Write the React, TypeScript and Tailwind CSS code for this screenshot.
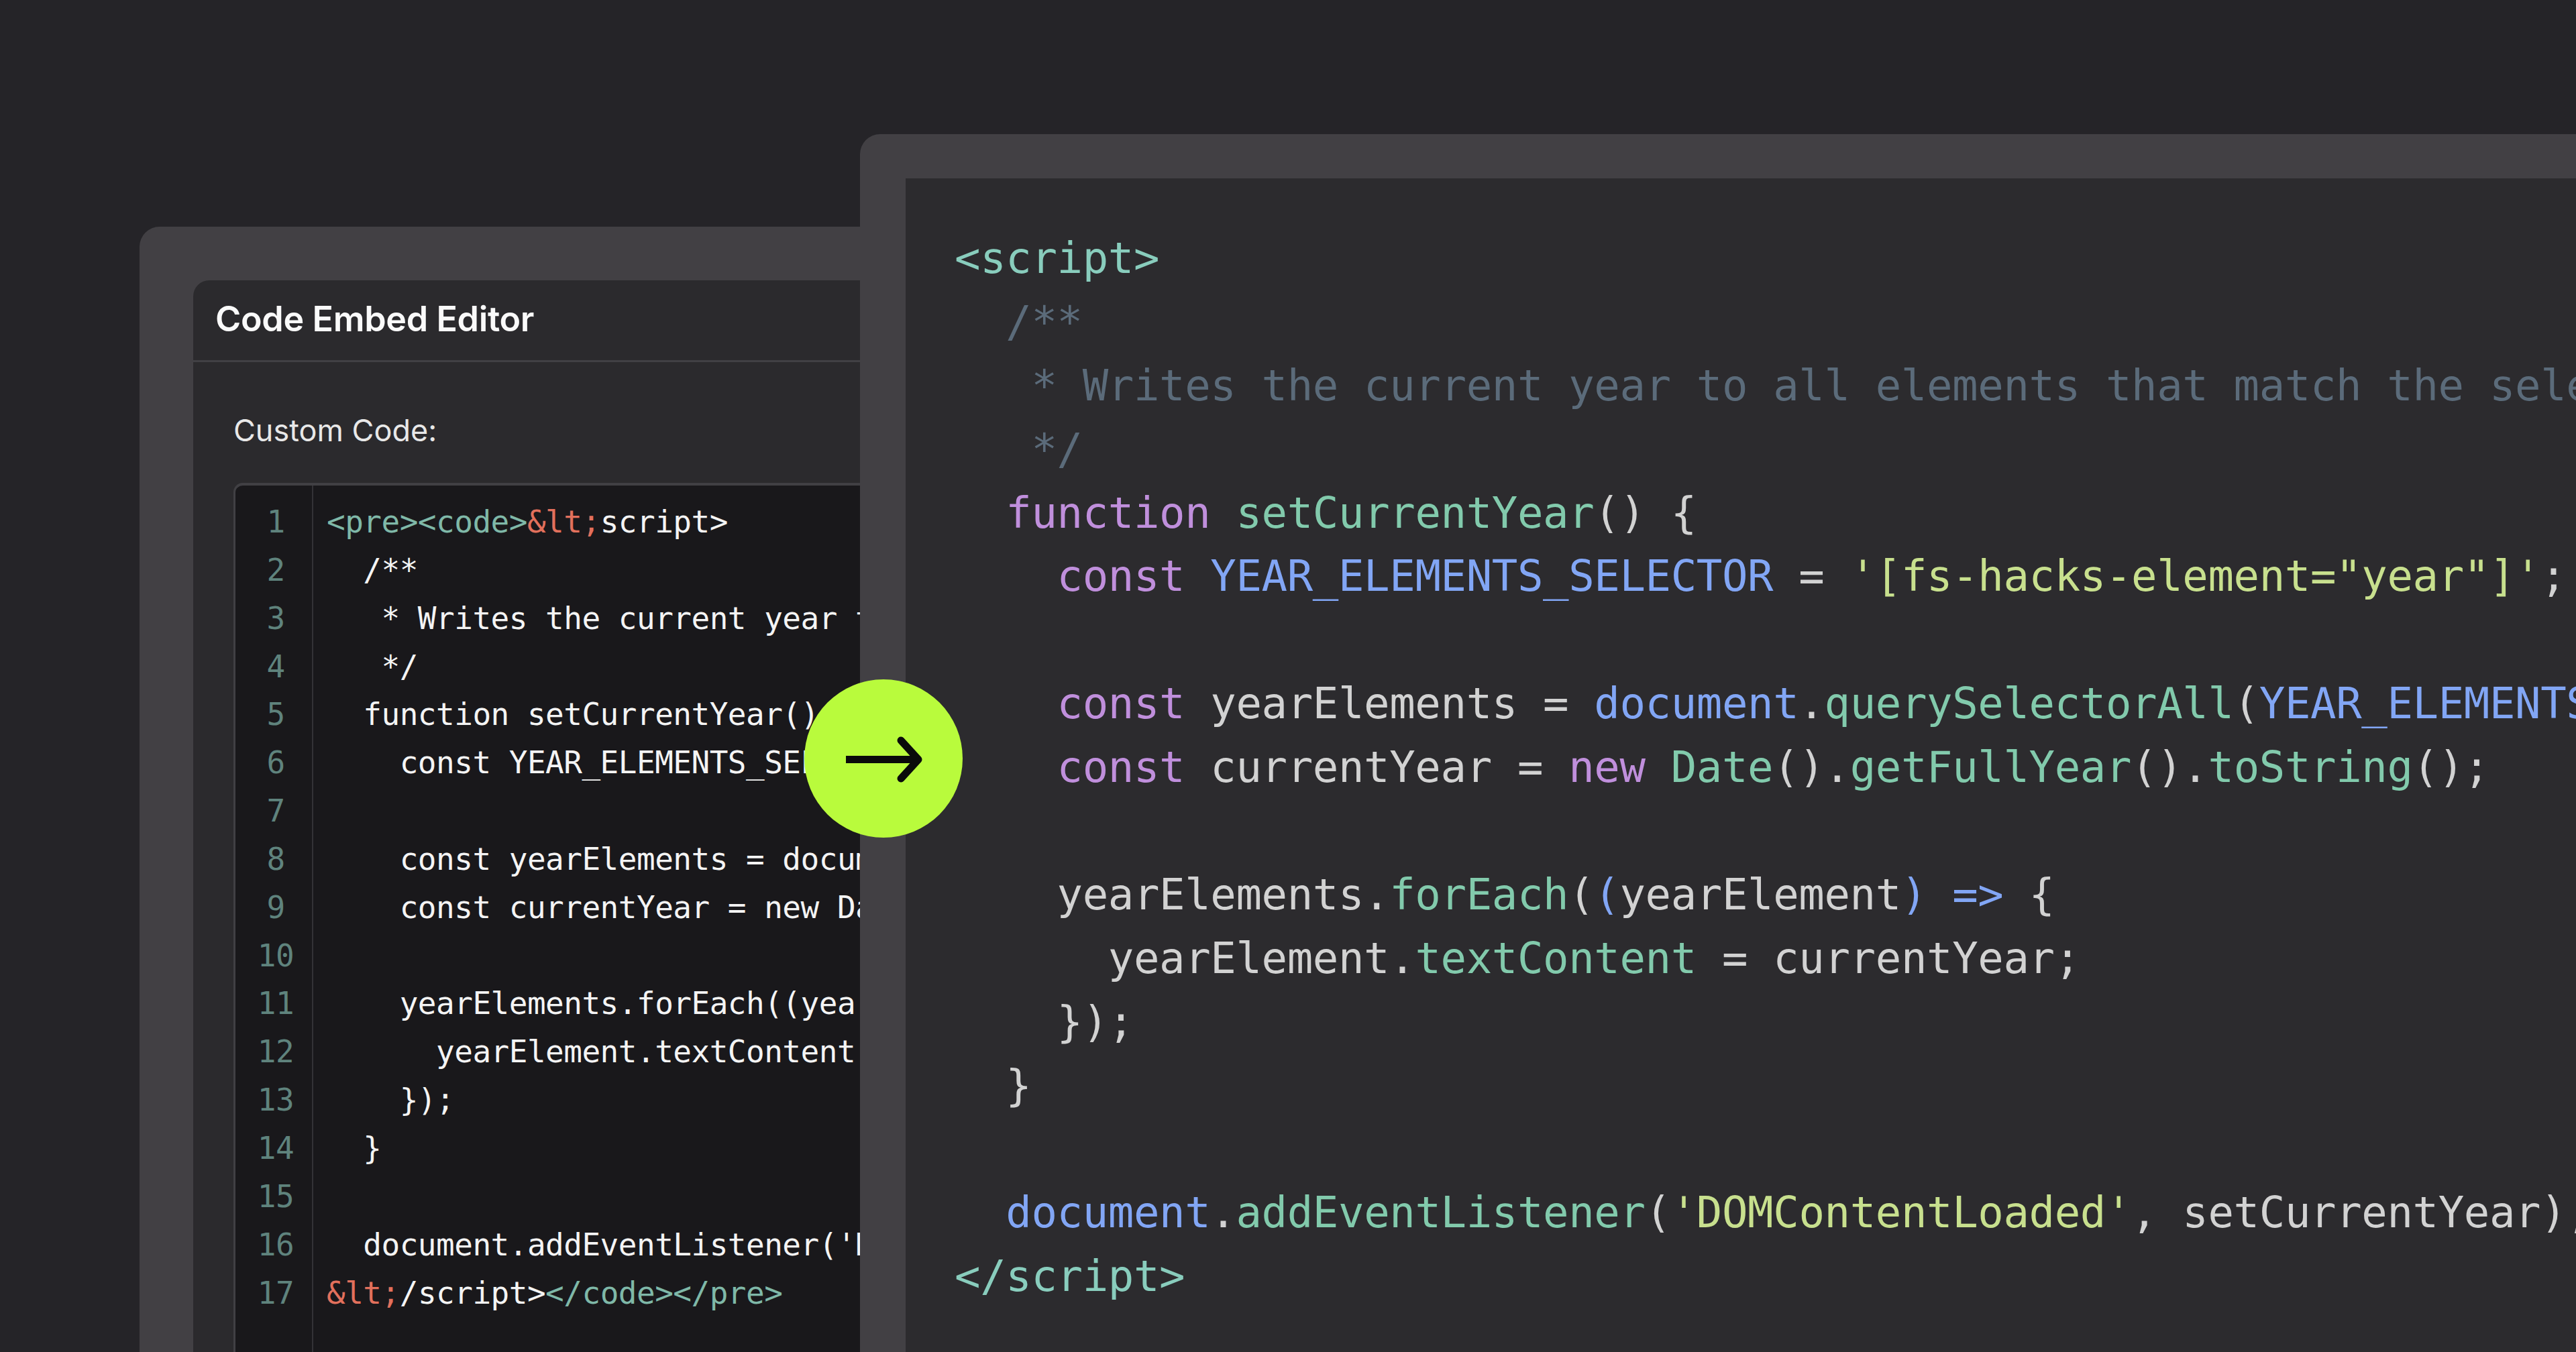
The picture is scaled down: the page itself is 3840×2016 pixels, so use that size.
type Seg = [string, string?];

const mono = "font-['DejaVu_Sans_Mono',monospace] whitespace-pre";

const T = "text-[#89cdbd]";
const C = "text-[#5b6b7a]";
const P = "text-[#c08fdc]";
const G = "text-[#82caac]";
const B = "text-[#82a6f5]";
const S = "text-[#c8e08e]";

const rightLines: Seg[][] = [
  [["<script>", T]],
  [["  /**", C]],
  [["   * Writes the current year to all elements that match the selector.", C]],
  [["   */", C]],
  [["  function", P], [" "], ["setCurrentYear", G], ["() {"]],
  [["    const", P], [" "], ["YEAR_ELEMENTS_SELECTOR", B], [" = "], ["'[fs-hacks-element=\"year\"]'", S], [";"]],
  [],
  [["    const", P], [" yearElements = "], ["document", B], ["."], ["querySelectorAll", G], ["("], ["YEAR_ELEMENTS_SELECTOR", B], [");"]],
  [["    const", P], [" currentYear = "], ["new", P], [" "], ["Date", G], ["()."], ["getFullYear", G], ["()."], ["toString", G], ["();"]],
  [],
  [["    yearElements."], ["forEach", G], ["("], ["(", B], ["yearElement"], [")", B], [" "], ["=>", B], [" {"]],
  [["      yearElement."], ["textContent", G], [" = currentYear;"]],
  [["    });"]],
  [["  }"]],
  [],
  [["  "], ["document", B], ["."], ["addEventListener", G], ["("], ["'DOMContentLoaded'", S], [", setCurrentYear);"]],
  [["</script>", T]],
];

const LT = "text-[#7fb8a8]";
const LO = "text-[#e2705c]";

const leftLines: Seg[][] = [
  [["<pre><code>", LT], ["&lt;", LO], ["script>"]],
  [["  /**"]],
  [["   * Writes the current year to all elements that match the selector."]],
  [["   */"]],
  [["  function setCurrentYear() {"]],
  [["    const YEAR_ELEMENTS_SELECTOR = '[fs-hacks-element=\"year\"]';"]],
  [],
  [["    const yearElements = document.querySelectorAll(YEAR_ELEMENTS_SELECTOR);"]],
  [["    const currentYear = new Date().getFullYear().toString();"]],
  [],
  [["    yearElements.forEach((yearElement) => {"]],
  [["      yearElement.textContent = currentYear;"]],
  [["    });"]],
  [["  }"]],
  [],
  [["  document.addEventListener('DOMContentLoaded', setCurrentYear);"]],
  [["&lt;", LO], ["/script>"], ["</code></pre>", LT]],
];

function Code({ lines, rowClass }: { lines: Seg[][]; rowClass: string }) {
  return (
    <div className="flex flex-col">
      {lines.map((line, i) => (
        <div key={i} className={rowClass}>
          {line.map(([text, color], j) => (
            <span key={j} className={color}>
              {text}
            </span>
          ))}
        </div>
      ))}
    </div>
  );
}

export default function App() {
  return (
    <div className="relative w-[3840px] h-[2016px] overflow-hidden bg-[#252428]">
      {/* Back window: the embed editor */}
      <div className="absolute left-[208px] top-[338px] w-[1200px] h-[1800px] rounded-tl-[30px] bg-[#424044] pl-[80px] pt-[80px]">
        <div className="h-full rounded-tl-[24px] bg-[#2b2a2d] font-['Inter',sans-serif]">
          <div className="h-[122px] border-b-[3px] border-[#414044] pl-[33px] pb-[4px] flex items-center">
            <span className="text-[52px] font-semibold tracking-[-0.35px] text-[#fafafa]">Code Embed Editor</span>
          </div>
          <div className="pl-[60px] pt-[68px]">
            <div className="h-[67px] text-[45px] leading-[67px] text-[#e8e8e8]">Custom Code:</div>
            <div className="mt-[45px] flex h-[1500px] rounded-tl-[14px] border-l-[3px] border-t-[4px] border-[#414044] bg-[#19181b] overflow-hidden">
              <div className={`w-[116px] shrink-0 border-r-[2px] border-[#333236] pt-[18px] pl-[6px] text-center text-[46px] tracking-[-0.52px] leading-[72px] text-[#5f837d] ${mono}`}>
                {leftLines.map((_, i) => (
                  <div key={i} className="h-[71.85px]">
                    {i + 1}
                  </div>
                ))}
              </div>
              <div className={`pl-[20px] pt-[18px] text-[46px] tracking-[-0.52px] leading-[72px] text-[#f4f4f4] ${mono}`}>
                <Code lines={leftLines} rowClass="h-[71.85px]" />
              </div>
            </div>
          </div>
        </div>
      </div>

      {/* Front window: the highlighted code */}
      <div className="absolute left-[1282px] top-[200px] w-[2700px] h-[2000px] rounded-tl-[30px] bg-[#424044] pl-[68px] pt-[66px]">
        <div className={`h-full bg-[#2c2b2e] pl-[73px] pt-[72px] text-[64px] tracking-[-0.4px] leading-[95px] text-[#d2d2d2] ${mono}`}>
          <Code lines={rightLines} rowClass="h-[94.9px]" />
        </div>
      </div>

      {/* Arrow badge */}
      <div className="absolute left-[1199px] top-[1013px] w-[236px] h-[236px] rounded-full bg-[#b9fb3c] flex items-center justify-center">
        <svg width="236" height="236" viewBox="0 0 236 236" fill="none" stroke="#0a0a0a" strokeWidth="11" strokeLinejoin="round">
          <path d="M62 119.5H168" />
          <path d="M144 91L170 119.5L144 148" strokeLinecap="round" />
        </svg>
      </div>
    </div>
  );
}
